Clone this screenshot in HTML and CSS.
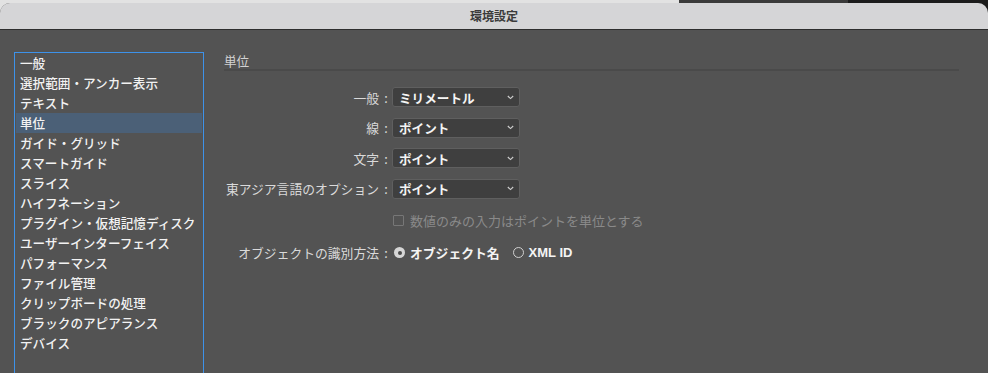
FILE: index.html
```html
<!DOCTYPE html>
<html lang="ja">
<head>
<meta charset="utf-8">
<title>環境設定</title>
<link rel="stylesheet" href="styles.css">
</head>
<body>
<div class="screen">
  <div class="window">
    <div class="titlebar">環境設定</div>
    <div class="content">
      <ul class="sidebar">
        <li>一般</li>
        <li>選択範囲・アンカー表示</li>
        <li>テキスト</li>
        <li class="selected">単位</li>
        <li>ガイド・グリッド</li>
        <li>スマートガイド</li>
        <li>スライス</li>
        <li>ハイフネーション</li>
        <li>プラグイン・仮想記憶ディスク</li>
        <li>ユーザーインターフェイス</li>
        <li>パフォーマンス</li>
        <li>ファイル管理</li>
        <li>クリップボードの処理</li>
        <li>ブラックのアピアランス</li>
        <li>デバイス</li>
      </ul>
      <div class="panel">
        <div class="heading">単位</div>
        <div class="form">
          <div class="row">
            <div class="label">一般<span class="colon">:</span></div>
            <div class="select"><span>ミリメートル</span><svg class="chev" width="7" height="5" viewBox="0 0 7 5"><path d="M0.8 1 L3.5 3.6 L6.2 1" fill="none" stroke="#cfcfcf" stroke-width="1.1"/></svg></div>
          </div>
          <div class="row">
            <div class="label">線<span class="colon">:</span></div>
            <div class="select"><span>ポイント</span><svg class="chev" width="7" height="5" viewBox="0 0 7 5"><path d="M0.8 1 L3.5 3.6 L6.2 1" fill="none" stroke="#cfcfcf" stroke-width="1.1"/></svg></div>
          </div>
          <div class="row">
            <div class="label">文字<span class="colon">:</span></div>
            <div class="select"><span>ポイント</span><svg class="chev" width="7" height="5" viewBox="0 0 7 5"><path d="M0.8 1 L3.5 3.6 L6.2 1" fill="none" stroke="#cfcfcf" stroke-width="1.1"/></svg></div>
          </div>
          <div class="row">
            <div class="label">東アジア言語のオプション<span class="colon">:</span></div>
            <div class="select"><span>ポイント</span><svg class="chev" width="7" height="5" viewBox="0 0 7 5"><path d="M0.8 1 L3.5 3.6 L6.2 1" fill="none" stroke="#cfcfcf" stroke-width="1.1"/></svg></div>
          </div>
          <div class="row row-check">
            <div class="label"></div>
            <div class="check"><span class="box"></span><span>数値のみの入力はポイントを単位とする</span></div>
          </div>
          <div class="row row-radio">
            <div class="label">オブジェクトの識別方法<span class="colon">:</span></div>
            <div class="radios">
              <span class="radio on"></span><span class="rtext">オブジェクト名</span>
              <span class="radio off"></span><span class="rtext latin">XML ID</span>
            </div>
          </div>
        </div>
      </div>
    </div>
  </div>
</div>
</body>
</html>
```
FILE: styles.css
```css
html, body {
  margin: 0;
  padding: 0;
  height: 100%;
  overflow: hidden;
}
body {
  font-family: "Noto Sans CJK JP", "Noto Sans", sans-serif;
  font-size: 12.6px;
}
.screen {
  height: 373px;
  background: linear-gradient(to right, #e2e2e2 0 679px, #3a3a3a 679px 848px, #1c1c1c 848px);
  padding-top: 3px;
  box-sizing: border-box;
  overflow: hidden;
}
.window {
  background: #535353;
  border-radius: 10px 10px 0 0;
  overflow: hidden;
  height: 380px;
}
.titlebar {
  height: 26px;
  line-height: 25px;
  background: #d5d5d7;
  border-bottom: 1px solid #2e2e2e;
  text-align: center;
  font-size: 12px;
  font-weight: 600;
  color: #3b3b3b;
}
.content {
  display: flex;
  padding: 22px 0 0 14px;
  gap: 20px;
}
.sidebar {
  list-style: none;
  margin: 0;
  padding: 0 1px;
  width: 186px;
  height: 340px;
  border: 1px solid #3d92ea;
  flex: none;
}
.sidebar li {
  height: 20px;
  line-height: 20px;
  padding-left: 4px;
  color: #f2f2f2;
  white-space: nowrap;
  font-weight: 500;
}
.sidebar li.selected {
  background: #4b6077;
}
.panel {
  width: 735px;
  flex: none;
  font-size: 12.8px;
}
.heading {
  height: 17px;
  line-height: 17px;
  color: #d2d2d2;
  border-bottom: 2px solid #4a4a4a;
  font-size: 12.6px;
}
.form {
  margin-top: 16px;
  display: flex;
  flex-direction: column;
  gap: 10.67px;
}
.row {
  display: flex;
  align-items: center;
  height: 20px;
}
.row-check {
  margin-top: 1.33px;
}
.row-radio {
  margin-top: 1.33px;
}
.label {
  width: 168px;
  flex: none;
  display: flex;
  justify-content: flex-end;
  align-items: center;
  color: #dadada;
  white-space: nowrap;
}
.colon {
  width: 14px;
  text-align: center;
  margin-right: -1px;
}
.select {
  height: 18px;
  width: 115px;
  border: 1px solid #5f5f5f;
  border-radius: 3px;
  background: #3f3f3f;
  display: flex;
  align-items: center;
  justify-content: space-between;
  padding: 0 5px 0 6px;
  color: #f4f4f4;
  font-weight: 700;
  font-size: 12.6px;
}
.chev {
  display: block;
}
.check {
  display: flex;
  align-items: center;
  gap: 6px;
  color: #8a8a8a;
  margin-left: 1px;
  font-size: 13px;
}
.box {
  width: 9px;
  height: 9px;
  border: 1px solid #777;
  border-radius: 1px;
}
.radios {
  display: flex;
  align-items: center;
  margin-left: 2px;
}
.radio {
  width: 11px;
  height: 11px;
  border-radius: 50%;
  box-sizing: border-box;
  flex: none;
}
.radio.on {
  background: #d6d6d6;
  display: flex;
  align-items: center;
  justify-content: center;
}
.radio.on::after {
  content: "";
  width: 4px;
  height: 4px;
  border-radius: 50%;
  background: #4a4a4a;
}
.radio.off {
  border: 1px solid #d0d0d0;
  margin-left: 13px;
}
.rtext {
  color: #f4f4f4;
  font-weight: 700;
  margin-left: 5px;
}
.rtext.latin {
  font-family: "Liberation Sans", "Noto Sans CJK JP", sans-serif;
  font-size: 13px;
  margin-left: 5px;
}
```
